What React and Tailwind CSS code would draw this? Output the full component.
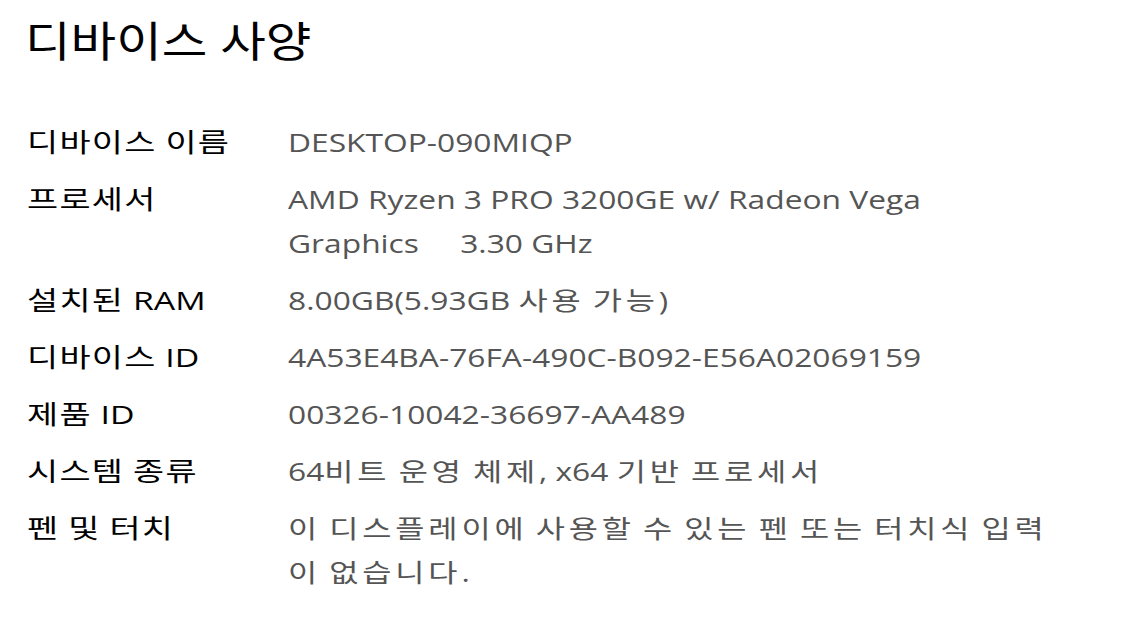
const specs = [
  { label: "디바이스 이름", value: ["DESKTOP-090MIQP"] },
  { label: "프로세서", value: ["AMD Ryzen 3 PRO 3200GE w/ Radeon Vega", "Graphics     3.30 GHz"] },
  { label: "설치된 RAM", value: ["8.00GB(5.93GB 사용 가능)"] },
  { label: "디바이스 ID", value: ["4A53E4BA-76FA-490C-B092-E56A02069159"] },
  { label: "제품 ID", value: ["00326-10042-36697-AA489"] },
  { label: "시스템 종류", value: ["64비트 운영 체제, x64 기반 프로세서"] },
  { label: "펜 및 터치", value: ["이 디스플레이에 사용할 수 있는 펜 또는 터치식 입력", "이 없습니다."] },
];

// 한글 구간만 자간을 조금 더 줌
const HANGUL = /([\uAC00-\uD7A3]+)/;

const Spaced = ({ text, hangul }) =>
  text
    .split(HANGUL)
    .filter(Boolean)
    .map((part, i) => (
      <span key={i} className={HANGUL.test(part) ? hangul : ""}>
        {part}
      </span>
    ));

export default function App() {
  return (
    <div
      className="w-[1125px] h-[617px] bg-white overflow-hidden"
      style={{ fontFamily: '"Open Sans", "Noto Sans CJK KR", sans-serif' }}
    >
      {/* 제목 */}
      <div className="pl-[25px] pt-[13px]">
        <h1 className="text-[42px] leading-[56px] font-normal text-black origin-left scale-x-[1.18]">
          디바이스 사양
        </h1>
      </div>

      {/* 사양 목록 */}
      <div className="mt-[51px] pl-[27px] flex flex-col gap-[13px]">
        {specs.map((row) => (
          <div key={row.label} className="flex">
            <div className="w-[261px] shrink-0">
              <div className="text-[26px] leading-[44px] text-black whitespace-pre origin-left scale-x-[1.3]">
                <Spaced text={row.label} hangul="tracking-[1px]" />
              </div>
            </div>
            <div className="text-[25px] leading-[44px] text-[#555] whitespace-pre">
              {row.value.map((line) => (
                <div key={line} className="origin-left scale-x-[1.27]">
                  <Spaced text={line} hangul="tracking-[3px]" />
                </div>
              ))}
            </div>
          </div>
        ))}
      </div>
    </div>
  );
}
